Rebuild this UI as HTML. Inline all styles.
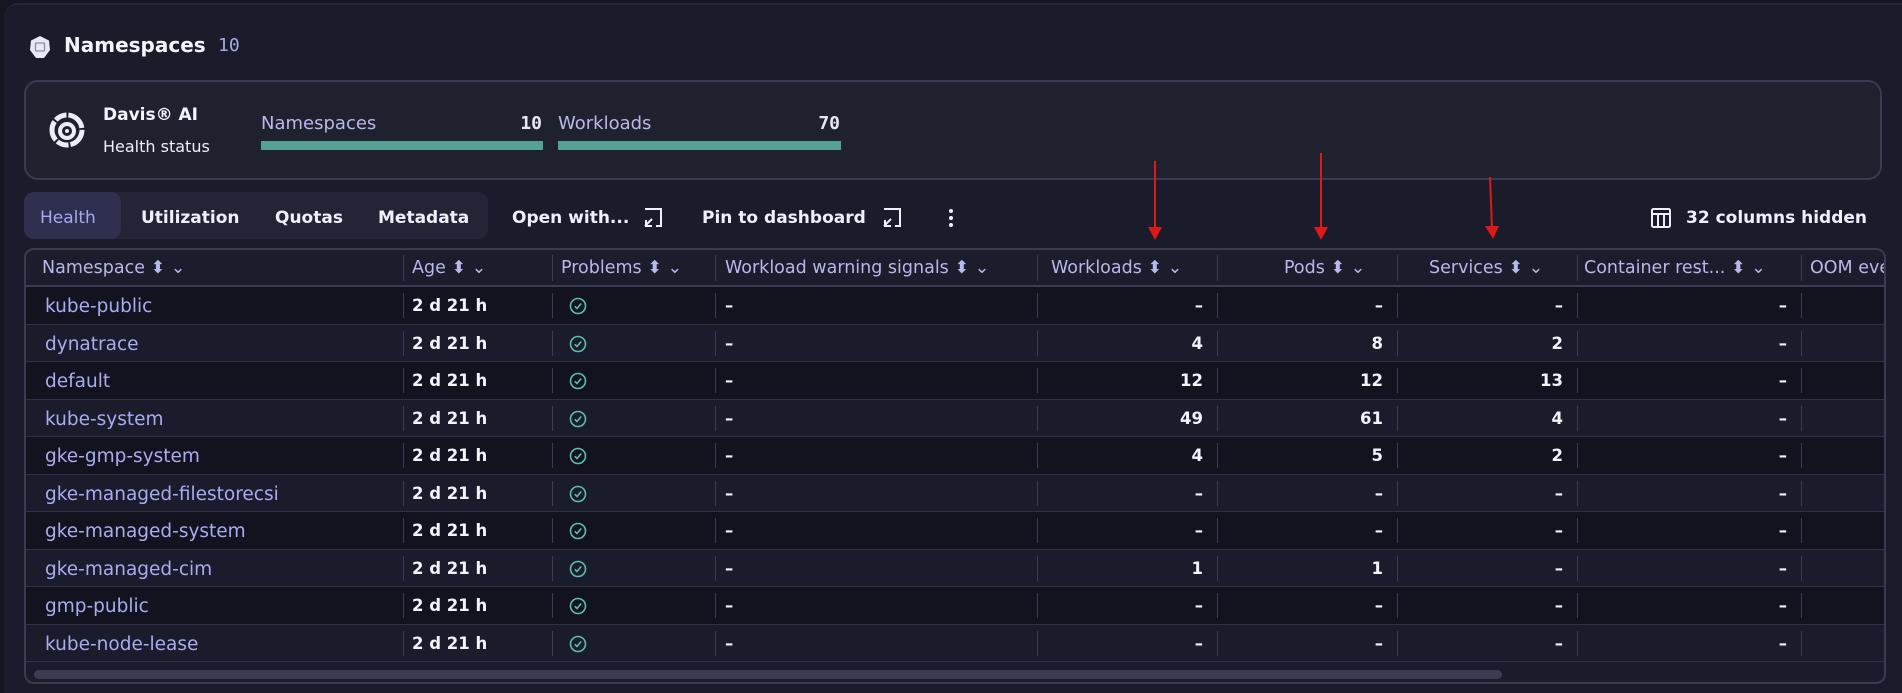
<!DOCTYPE html>
<html><head><meta charset="utf-8"><style>
*{box-sizing:border-box;margin:0;padding:0}
body{width:1902px;height:688px;background:#151622;font-family:"DejaVu Sans","Liberation Sans",sans-serif;color:#e6e7f5;overflow:hidden;position:relative}
.panel{position:absolute;left:4px;top:3px;width:1898px;height:690px;background:#1a1b2b;border-top-left-radius:14px;border-top:2px solid #24253a}
.a{position:absolute;white-space:nowrap}
.card{position:absolute;left:24px;top:80px;width:1858px;height:100px;border:2px solid #3a3b50;border-radius:14px;background:#20212f}
.bar{position:absolute;height:9px;background:#55a196;top:141px}
.tabs{position:absolute;left:24px;top:192px;width:464px;height:47px;background:#232436;border-radius:10px}
.sel{position:absolute;left:24px;top:192px;width:97px;height:47px;background:#2f3050;border-radius:10px}
.btn{font-size:17px;font-weight:bold;color:#eef0fb;top:208px}
.table{position:absolute;left:24px;top:248px;width:1862px;height:436px;border:2px solid #3a3b50;border-radius:10px;background:#1a1b2b;overflow:hidden}
.hd{position:absolute;left:0;top:0;width:100%;height:38px;border-bottom:3px solid #3a3b50;background:#1b1c2c}
.row{position:absolute;left:0;width:100%;height:38px;border-bottom:1px solid #2e3045}
.d{background:#13131f}.l{background:#1a1b2b}
.vd{position:absolute;width:1px;background:#3a3c52}
.ht{font-size:17.5px;color:#b6b9ea;top:8px}
.c{font-size:16.5px;top:9px}
.nm{color:#a9acf0;font-size:18.5px;top:9px}
.b{font-weight:bold;color:#f2f3fb}
.r{text-align:right}
</style></head><body>
<div class="panel"></div>
<svg class="a" style="left:29px;top:35px" width="22" height="24" viewBox="0 0 22 24"><path d="M11 1 L20 5.5 L21 15 L15 23 L7 23 L1 15 L2 5.5Z" fill="#e8e9f5"/><rect x="6.5" y="8" width="9" height="8" rx="1" fill="none" stroke="#8a8ca8" stroke-width="1.3"/></svg>
<div class="a" style="left:64px;top:33px;font-size:20px;font-weight:bold;color:#f4f5fc">Namespaces</div>
<div class="a" style="left:218px;top:35px;font-size:18px;font-family:'DejaVu Sans Mono','Liberation Mono',monospace;color:#a6a9e0">10</div>

<div class="card"></div>
<svg class="a" style="left:48px;top:111px" width="38" height="38" viewBox="0 0 38 38"><circle cx="19" cy="19" r="15" fill="none" stroke="#ecedf7" stroke-width="5" stroke-dasharray="20 2 12 2"/><circle cx="19" cy="20" r="7" fill="none" stroke="#ecedf7" stroke-width="4"/><circle cx="19" cy="20" r="2" fill="#ecedf7"/></svg>
<div class="a" style="left:103px;top:105px;font-size:17px;font-weight:bold;color:#f4f5fc">Davis® AI</div>
<div class="a" style="left:103px;top:137px;font-size:16px;color:#eef0fb">Health status</div>
<div class="a" style="left:261px;top:113px;font-size:18px;color:#b6b9ea">Namespaces</div>
<div class="a" style="left:500px;top:113px;width:42px;text-align:right;font-size:18px;font-weight:bold;font-family:'DejaVu Sans Mono',monospace">10</div>
<div class="bar" style="left:261px;width:282px"></div>
<div class="a" style="left:558px;top:113px;font-size:18px;color:#b6b9ea">Workloads</div>
<div class="a" style="left:798px;top:113px;width:42px;text-align:right;font-size:18px;font-weight:bold;font-family:'DejaVu Sans Mono',monospace">70</div>
<div class="bar" style="left:558px;width:283px"></div>

<div class="tabs"></div><div class="sel"></div>
<div class="a btn" style="left:40px;color:#a6a9f0;font-weight:normal">Health</div>
<div class="a btn" style="left:141px">Utilization</div>
<div class="a btn" style="left:275px">Quotas</div>
<div class="a btn" style="left:378px">Metadata</div>
<div class="a btn" style="left:512px">Open with...</div>
<svg class="a" style="left:642px;top:207px" width="22" height="22" viewBox="0 0 22 22" fill="none" stroke="#eef0fb" stroke-width="2"><path d="M3 2H19V19H14"/><path d="M3 19L10 12M4 13V19H10"/></svg>
<div class="a btn" style="left:702px">Pin to dashboard</div>
<svg class="a" style="left:881px;top:207px" width="22" height="22" viewBox="0 0 22 22" fill="none" stroke="#eef0fb" stroke-width="2"><path d="M3 2H19V19H14"/><path d="M3 19L10 12M4 13V19H10"/></svg>
<svg class="a" style="left:947px;top:207px" width="8" height="22"><circle cx="4" cy="4" r="2" fill="#eef0fb"/><circle cx="4" cy="11" r="2" fill="#eef0fb"/><circle cx="4" cy="18" r="2" fill="#eef0fb"/></svg>
<svg class="a" style="left:1650px;top:207px" width="22" height="22" viewBox="0 0 22 22" fill="none" stroke="#eef0fb" stroke-width="2"><rect x="2" y="2" width="18" height="18" rx="1.5"/><path d="M2 7H20M8 7V20M14 7V20"/></svg>
<div class="a btn" style="left:1686px">32 columns hidden</div>

<div class="table">
<div class="hd">
<div class="a ht" style="left:16px">Namespace ⬍ ⌄</div>
<div class="vd" style="left:377px;top:5px;height:26px"></div>
<div class="a ht" style="left:386px">Age ⬍ ⌄</div>
<div class="vd" style="left:526px;top:5px;height:26px"></div>
<div class="a ht" style="left:535px">Problems ⬍ ⌄</div>
<div class="vd" style="left:689px;top:5px;height:26px"></div>
<div class="a ht" style="left:699px">Workload warning signals ⬍ ⌄</div>
<div class="vd" style="left:1011px;top:5px;height:26px"></div>
<div class="a ht" style="left:1025px">Workloads ⬍ ⌄</div>
<div class="vd" style="left:1191px;top:5px;height:26px"></div>
<div class="a ht" style="left:1258px">Pods ⬍ ⌄</div>
<div class="vd" style="left:1371px;top:5px;height:26px"></div>
<div class="a ht" style="left:1403px">Services ⬍ ⌄</div>
<div class="vd" style="left:1551px;top:5px;height:26px"></div>
<div class="a ht" style="left:1558px">Container rest... ⬍ ⌄</div>
<div class="vd" style="left:1775px;top:5px;height:26px"></div>
<div class="a ht" style="left:1784px">OOM events</div>
</div>
<div id="rows"></div>
<div class="a" style="left:8px;top:420px;width:1468px;height:9px;border-radius:5px;background:#3b3c52"></div>
</div>

<svg class="a" style="left:0;top:0" width="1902" height="688">
<g stroke="#e01818" stroke-width="2"><line x1="1155" y1="161" x2="1155" y2="228"/><line x1="1321" y1="153" x2="1321" y2="228"/><line x1="1490" y1="177" x2="1492" y2="228"/></g>
<g fill="#e01818"><path d="M1148 227L1162 227L1155 240Z"/><path d="M1314 227L1328 227L1321 240Z"/><path d="M1485 226L1499 226L1493 239Z"/></g>
</svg>

<script>
var data=[["kube-public","–","–","–"],["dynatrace","4","8","2"],["default","12","12","13"],["kube-system","49","61","4"],["gke-gmp-system","4","5","2"],["gke-managed-filestorecsi","–","–","–"],["gke-managed-system","–","–","–"],["gke-managed-cim","1","1","–"],["gmp-public","–","–","–"],["kube-node-lease","–","–","–"]];
var h="";
data.forEach(function(r,i){
var t=37+i*37.5;
h+='<div class="row '+(i%2?'l':'d')+'" style="top:'+t+'px;height:37.5px">';
[377,526,689,1011,1191,1371,1551,1775].forEach(function(x){h+='<div class="vd" style="left:'+x+'px;top:6px;height:25px"></div>'});
h+='<div class="a c nm" style="left:19px">'+r[0]+'</div>';
h+='<div class="a c b" style="left:386px">2 d 21 h</div>';
h+='<svg class="a" style="left:543px;top:10px" width="18" height="18" viewBox="0 0 18 18" fill="none" stroke="#5cbfae" stroke-width="1.6"><circle cx="9" cy="9" r="7.5"/><path d="M5.8 9.3L8 11.5L12.2 6.5"/></svg>';
h+='<div class="a c b" style="left:699px">–</div>';
h+='<div class="a c b r" style="left:1080px;width:97px">'+r[1]+'</div>';
h+='<div class="a c b r" style="left:1260px;width:97px">'+r[2]+'</div>';
h+='<div class="a c b r" style="left:1440px;width:97px">'+r[3]+'</div>';
h+='<div class="a c b r" style="left:1660px;width:101px">–</div>';
h+='</div>';
});
document.getElementById("rows").innerHTML=h;
</script>
</body></html>
